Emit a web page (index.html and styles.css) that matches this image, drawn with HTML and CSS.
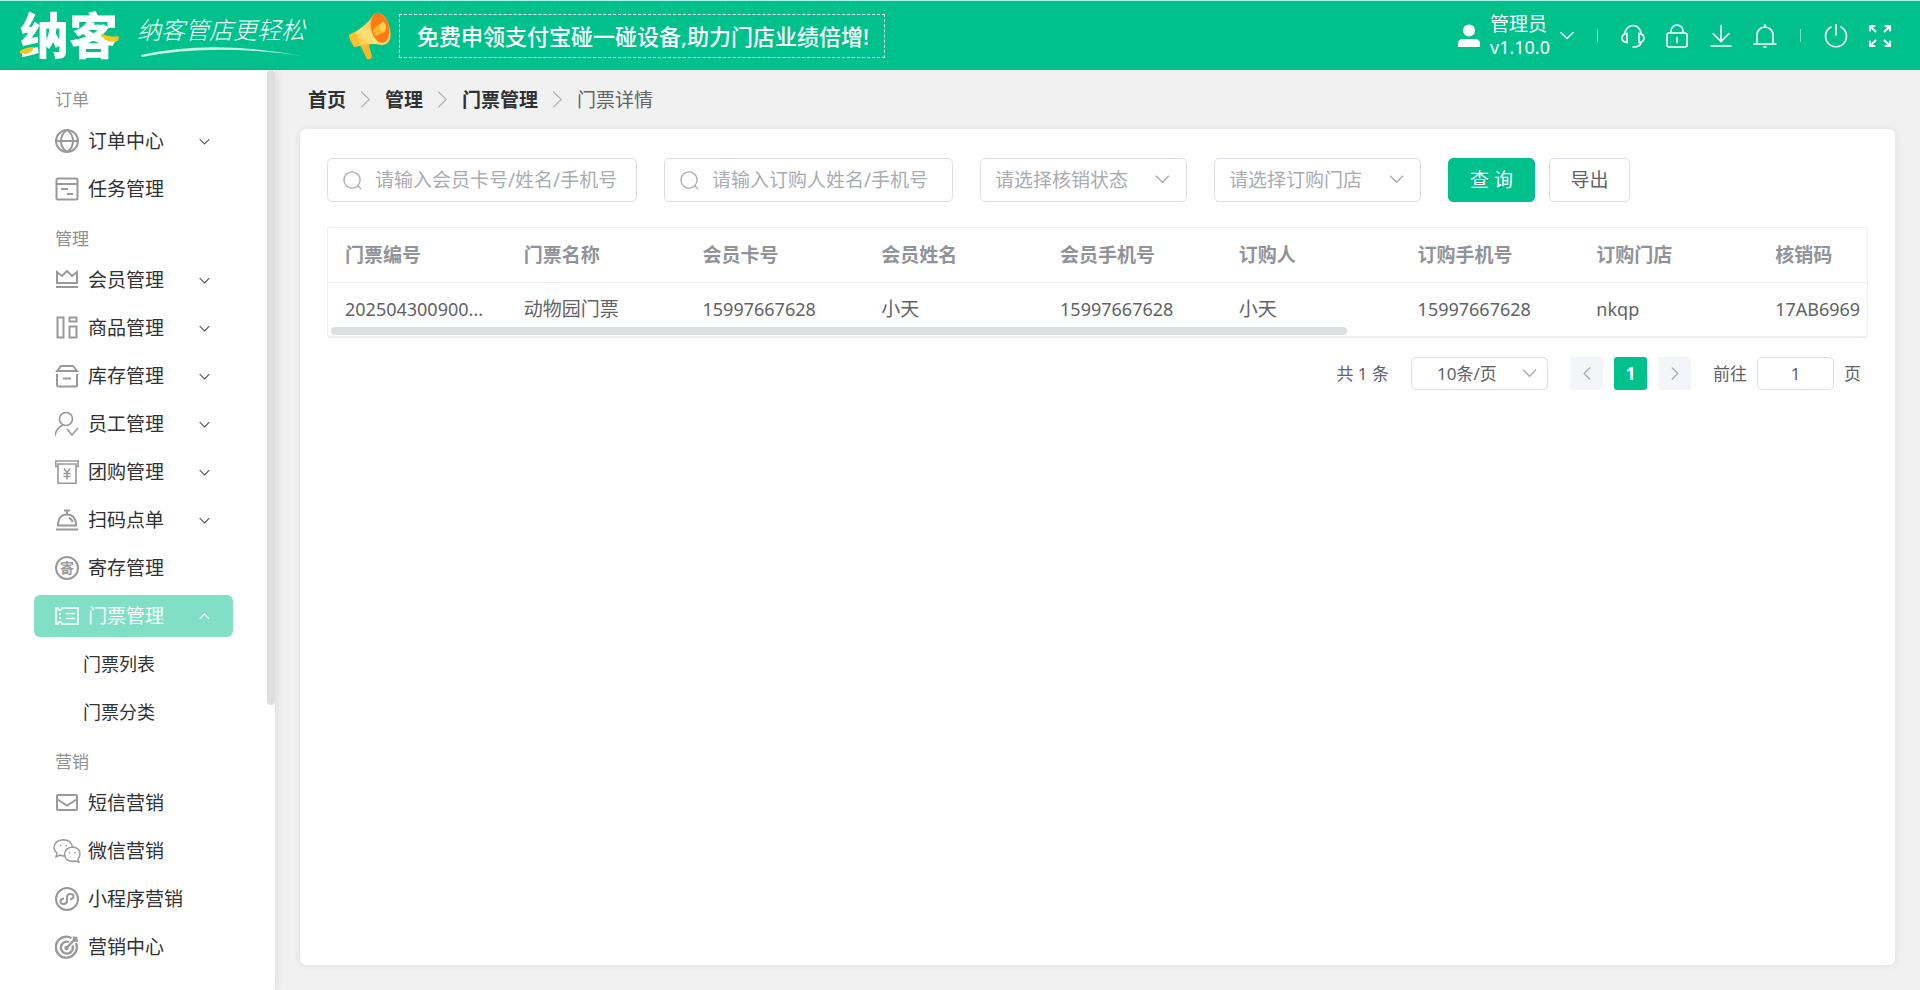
FILE: index.html
```html
<!DOCTYPE html>
<html lang="zh-CN">
<head>
  <meta charset="UTF-8" />
  <meta name="viewport" content="width=device-width, initial-scale=1.0"/>
  <title>门票详情</title>
  <link rel="stylesheet" href="styles.css">
</head>
<body>

  <!-- Shared chevrons -->
  <svg class="symbols" aria-hidden="true">
    <symbol id="down" viewBox="0 0 16 10"><path d="M1 1.500l7 7 7-7"/></symbol>
    <symbol id="up" viewBox="0 0 16 10"><path d="M1 8.500l7-7 7 7"/></symbol>
    <symbol id="right" viewBox="0 0 10 16"><path d="M1 .5l7.500 7.500L1 15.500"/></symbol>
    <symbol id="left" viewBox="0 0 10 16"><path d="M9 .5L1.500 8 9 15.500"/></symbol>
    <symbol id="search" viewBox="0 0 20 20"><circle cx="9.500" cy="9.500" r="8.500"/><path d="M15.500 15.500l3.500 3.500"/></symbol>
  </svg>

  <header class="header">
    <a class="logo" href="#">
      <span class="logo-name">纳客</span>
      <svg class="logo-accent" viewBox="0 0 100 44"><path d="M0 38q6-4 14-4-2 6-9 7l-5-1z"/><path d="M81 20q8 5 18 3l-1 5q-9 2-14-2z"/></svg>
    </a>
    <div class="slogan">
      <span class="slogan-text">纳客管店更轻松</span>
      <svg class="slogan-line" viewBox="0 0 162 12"><path d="M0 9Q70-7 162 10 72-3 1 11z"/></svg>
    </div>
    <a class="banner" href="#">
      <svg class="horn" viewBox="0 0 46 50">
        <defs>
          <linearGradient id="hornBody" x1="0" y1="1" x2="1" y2="0"><stop offset="0" stop-color="#ffb51f"/><stop offset=".4" stop-color="#ffe27a"/><stop offset="1" stop-color="#ff9a12"/></linearGradient>
        </defs>
        <path d="M11 32l9-2 4 16q-1 3-5 2z" fill="#ffb52a"/>
        <path d="M1 24Q17 17 26 3q12-4 16 15 3 16-8 16-12-3-27 2-5-5-6-12z" fill="url(#hornBody)"/>
        <path d="M1 24l6-3q4 5 4 13l-5 2q-4-6-5-12z" fill="#ffc02e"/>
        <ellipse cx="32" cy="17" rx="9" ry="15" transform="rotate(-12 32 17)" fill="#ff7a14"/>
        <path d="M25 18l8-6q5 1 4 9l-9 4q-3-2-3-7z" fill="#ffb52a"/>
        <ellipse cx="35" cy="16" rx="3" ry="5" fill="#ffd24d"/>
      </svg>
      <span class="banner-text">免费申领支付宝碰一碰设备,助力门店业绩倍增!</span>
    </a>

    <div class="tools">
      <button class="user" type="button">
        <svg class="user-icon" viewBox="0 0 22 24"><circle cx="11" cy="6.500" r="6"/><path d="M0 23v-3q0-5 5-5h12q5 0 5 5v3z"/></svg>
        <span class="user-name">管理员<br><span class="num">v1.10.0</span></span>
        <svg class="line user-arrow"><use href="#down"/></svg>
      </button>
      <span class="divider"></span>
      <button class="tool" type="button" aria-label="客服"><svg class="line" viewBox="0 0 24 24"><path d="M4 10a8 8.500 0 0 1 16 0M6 9.500v9Q1 18 1 14t5-4.500zM18 9.500v9q5-.5 5-4.500t-5-4.500zM20 18q0 5-8 5"/></svg></button>
      <button class="tool" type="button" aria-label="锁屏"><svg class="line" viewBox="0 0 24 24"><rect x="2" y="9" width="20" height="14" rx="2"/><path d="M6 9V7a6 6 0 0 1 12 0v2M12 13.500v5"/></svg></button>
      <button class="tool" type="button" aria-label="下载"><svg class="line" viewBox="0 0 24 24"><path d="M12 1.500V17M4 9.500l8 8 8-8M2 22h20"/></svg></button>
      <button class="tool" type="button" aria-label="消息"><svg class="line" viewBox="0 0 24 24"><path d="M12 .5v2M1 20h22M4 20v-9a8 8 0 0 1 16 0v9M11 23h2"/></svg></button>
      <span class="divider"></span>
      <button class="tool" type="button" aria-label="退出"><svg class="line" viewBox="0 0 24 24"><path d="M12 0v11M7 3a10.500 10.500 0 1 0 10 0"/></svg></button>
      <button class="tool" type="button" aria-label="全屏"><svg class="line full" viewBox="0 0 24 24"><path d="M2 6.500V2h4.500M2 2l5.500 5.500M17.500 2H22v4.500M22 2l-5.500 5.500M2 17.500V22h4.500M2 22l5.500-5.500M22 17.500V22h-4.500M22 22l-5.500-5.500"/></svg></button>
    </div>
  </header>

  <div class="layout">
    <aside class="sidebar">
      <nav class="menu">
        <h2 class="group">订单</h2>
        <a class="item" href="#"><svg class="icon" viewBox="0 0 24 24"><circle cx="12" cy="12" r="11"/><path d="M1 12h22M12 1Q6 5 6 12t6 11q6-4 6-11T12 1z"/></svg>订单中心<svg class="arrow"><use href="#down"/></svg></a>
        <a class="item" href="#"><svg class="icon" viewBox="0 0 24 24"><rect x="1.500" y="1.500" width="21" height="21" rx="1.500"/><path d="M2 7h20M6 12h7M12 17h6"/></svg>任务管理</a>

        <h2 class="group">管理</h2>
        <a class="item" href="#"><svg class="icon" viewBox="0 0 24 24"><path d="M2 15V4l5 4 5-5 5 5 5-4v11zM1 19h22"/></svg>会员管理<svg class="arrow"><use href="#down"/></svg></a>
        <a class="item" href="#"><svg class="icon" viewBox="0 0 24 24"><path d="M2.500 1.500h6v20h-6zM14.500 1.500h7v4h-7zM14.500 10.500h7v11h-7z"/></svg>商品管理<svg class="arrow"><use href="#down"/></svg></a>
        <a class="item" href="#"><svg class="icon" viewBox="0 0 24 24"><path d="M2 7l4-5h12l4 5zM2 10v11q0 1.500 1.500 1.500h17q1.500 0 1.500-1.500V10M8 14.500h8"/></svg>库存管理<svg class="arrow"><use href="#down"/></svg></a>
        <a class="item" href="#"><svg class="icon thin" viewBox="0 0 24 24"><circle cx="11" cy="7" r="6.500"/><path d="M0 24q1-8 8-11M12 17l5 6 6-7"/></svg>员工管理<svg class="arrow"><use href="#down"/></svg></a>
        <a class="item" href="#"><svg class="icon thin" viewBox="0 0 24 24"><path d="M3 6.500H.800V1h22.400v5.500H21M3 4v19.200h18V4zM9 8.500l3 4 3-4M12 12.500v7M8.500 13.500h7M8.500 16.500h7"/></svg>团购管理<svg class="arrow"><use href="#down"/></svg></a>
        <a class="item" href="#"><svg class="icon" viewBox="0 0 24 24"><path d="M9 2.500h6M12 2.500v4M3 17.500v-2q1-9 9-9t9 9v2zM1 21.500h22M14 10q3 1 3.500 4"/></svg>扫码点单<svg class="arrow"><use href="#down"/></svg></a>
        <a class="item" href="#"><span class="round">寄</span>寄存管理</a>
        <a class="item active" href="#"><svg class="icon" viewBox="0 0 24 24"><path d="M1 4h2q0 2 2 2t2-2h16v16H7q0-2-2-2t-2 2H1zM5 9v2M5 13v2M11 9.500h9M11 14.500h9"/></svg>门票管理<svg class="arrow"><use href="#up"/></svg></a>
        <a class="sub" href="#">门票列表</a>
        <a class="sub" href="#">门票分类</a>

        <h2 class="group">营销</h2>
        <a class="item" href="#"><svg class="icon" viewBox="0 0 24 24"><rect x="2" y="4" width="20" height="15" rx="1"/><path d="M2.500 8.500l9.500 6 9.500-6"/></svg>短信营销</a>
        <a class="item" href="#"><svg class="icon wechat" viewBox="0 0 28 24"><path d="M11 17q-2 0-4-1l-4 2 1-4Q1 12 1 8.500 2 1 10 .7q8 .3 9.500 6.800"/><path d="M20 8q7 1 7 7 0 3-2 5l1 3.200-3.500-1.200q-10 1.500-11-6.500Q12 8.500 20 8zM7.500 6v1.500M13.500 6v1.500M16.500 13v1.500M22 13v1.500"/></svg>微信营销</a>
        <a class="item" href="#"><svg class="icon" viewBox="0 0 24 24"><circle cx="12" cy="12" r="11"/><path d="M9 11.500q-3.500.5-3.500 3t3 2.500q3.500 0 3.500-3V10q0-3 3.500-3t3 2.500-3.500 3"/></svg>小程序营销</a>
        <a class="item" href="#"><svg class="icon bold" viewBox="0 0 24 24"><path d="M16.500 3A10.500 10.500 0 1 0 21 8M14 7a6 6 0 1 0 3.500 3.500M11.500 13L22 2M19 1.500v4h4"/><circle cx="11.500" cy="13" r="1"/></svg>营销中心</a>
      </nav>
      <div class="side-thumb"></div>
    </aside>

    <main class="main">
      <nav class="crumbs">
        <a href="#">首页</a>
        <svg><use href="#right"/></svg>
        <a href="#">管理</a>
        <svg><use href="#right"/></svg>
        <a href="#">门票管理</a>
        <svg><use href="#right"/></svg>
        <span>门票详情</span>
      </nav>

      <section class="card">
        <form class="filters">
          <label class="field member">
            <svg><use href="#search"/></svg>
            <input type="text" aria-label="会员" placeholder="请输入会员卡号/姓名/手机号">
          </label>
          <label class="field buyer">
            <svg><use href="#search"/></svg>
            <input type="text" aria-label="订购人" placeholder="请输入订购人姓名/手机号">
          </label>
          <div class="select">
            <select aria-label="核销状态"><option>请选择核销状态</option></select>
            <svg><use href="#down"/></svg>
          </div>
          <div class="select">
            <select aria-label="订购门店"><option>请选择订购门店</option></select>
            <svg><use href="#down"/></svg>
          </div>
          <div class="buttons">
            <button class="btn primary" type="button">查 询</button>
            <button class="btn" type="button">导出</button>
          </div>
        </form>

        <div class="table-box">
          <table class="table">
            <thead>
              <tr>
                <th>门票编号</th>
                <th>门票名称</th>
                <th>会员卡号</th>
                <th>会员姓名</th>
                <th>会员手机号</th>
                <th>订购人</th>
                <th>订购手机号</th>
                <th>订购门店</th>
                <th>核销码</th>
              </tr>
            </thead>
            <tbody>
              <tr>
                <td class="num">202504300900...</td>
                <td>动物园门票</td>
                <td class="num">15997667628</td>
                <td>小天</td>
                <td class="num">15997667628</td>
                <td>小天</td>
                <td class="num">15997667628</td>
                <td class="num">nkqp</td>
                <td class="num">17AB6969</td>
              </tr>
            </tbody>
          </table>
          <div class="table-thumb"></div>
        </div>

        <div class="pager">
          <span class="total">共 1 条</span>
          <div class="select small">
            <select aria-label="每页条数"><option>10条/页</option></select>
            <svg><use href="#down"/></svg>
          </div>
          <div class="pages">
            <button type="button" aria-label="上一页" disabled><svg><use href="#left"/></svg></button>
            <button type="button" class="current">1</button>
            <button type="button" aria-label="下一页" disabled><svg><use href="#right"/></svg></button>
          </div>
          <label class="jump">前往 <input type="text" value="1"> 页</label>
        </div>
      </section>
    </main>
  </div>

</body>
</html>
```
FILE: styles.css
```css
* {
  box-sizing: border-box;
}

body {
  margin: 0;
  min-height: 100vh;
  display: flex;
  flex-direction: column;
  background: #f1f1f1;
  color: #303133;
  font-family: "Noto Sans", "Noto Sans CJK SC", sans-serif;
  font-size: 19px;
  line-height: 24px;
}

a {
  color: inherit;
  text-decoration: none;
}

button,
input,
select {
  font: inherit;
  color: inherit;
}

button {
  padding: 0;
  border: 0;
  background: none;
  cursor: pointer;
}

svg {
  flex: none;
  fill: none;
  stroke: currentColor;
}

.symbols {
  position: absolute;
  width: 0;
  height: 0;
}

.num {
  font-size: 18px;
}

/* header */
.header {
  display: flex;
  align-items: center;
  height: 70px;
  padding: 0 28px 0 20px;
  border-top: 1px solid #a5f3e6;
  background: #00c08b;
  color: #fff;
}

.logo {
  position: relative;
  width: 100px;
}

.logo-name {
  font-size: 49px;
  font-weight: 900;
  line-height: 44px;
}

.logo-accent {
  position: absolute;
  left: 0;
  top: 0;
  width: 100px;
  height: 44px;
  fill: #f5c51c;
  stroke: none;
}

.slogan {
  display: flex;
  flex-direction: column;
  width: 175px;
  margin-left: 17px;
}

.slogan-text {
  font-size: 24px;
  font-style: italic;
  font-weight: 300;
  line-height: 32px;
}

.slogan-line {
  width: 162px;
  height: 12px;
  margin-left: 4px;
  fill: #c9f5e8;
  stroke: none;
}

.banner {
  display: flex;
  align-items: center;
  gap: 5px;
  margin-left: 36px;
}

.horn {
  width: 46px;
  height: 50px;
  stroke: none;
}

.banner-text {
  padding: 0 15px 0 17px;
  border: 1px dashed #fff;
  font-size: 22px;
  font-weight: 500;
  line-height: 42px;
}

.tools {
  display: flex;
  align-items: center;
  gap: 20px;
  margin-left: auto;
}

.user {
  display: flex;
  align-items: center;
  gap: 10px;
  text-align: left;
}

.user-icon {
  width: 22px;
  height: 24px;
  fill: #fff;
  stroke: none;
}

.user-name {
  line-height: 23px;
}

.user-arrow {
  width: 14px;
  height: 9px;
}

.divider {
  width: 1px;
  height: 13px;
  margin: 0 3px;
  background: #7fdfc4;
}

.tool,
.tool svg {
  display: block;
  width: 24px;
  height: 24px;
}

.line {
  stroke-width: 1.6;
  stroke-linecap: round;
}

.full {
  stroke-width: 2;
}

/* sidebar */
.layout {
  display: flex;
  flex: 1;
}

.sidebar {
  position: relative;
  z-index: 1;
  flex: none;
  width: 275px;
  padding-top: 4px;
  background: #fff;
  box-shadow: 2px 0 8px rgba(0, 0, 0, 0.08);
}

.side-thumb {
  position: absolute;
  top: 0;
  right: 0;
  width: 8px;
  height: 69%;
  border-radius: 4px;
  background: #dddfdf;
}

.menu {
  display: flex;
  flex-direction: column;
}

.group {
  height: 43px;
  margin: 0;
  padding: 14px 0 0 55px;
  color: #909090;
  font-size: 17px;
  font-weight: 400;
}

.item {
  display: flex;
  align-items: center;
  gap: 9px;
  height: 42px;
  margin: 3px 42px 3px 34px;
  padding: 0 23px 0 21px;
  border-radius: 6px;
}

.item.active {
  background: #80dfc4;
  color: #fff;
}

.icon {
  width: 24px;
  height: 24px;
  color: #999;
  stroke-width: 2;
}

.icon.thin {
  stroke-width: 1.6;
}

.icon.bold {
  stroke-width: 2.4;
}

.icon.wechat {
  width: 28px;
  margin: 0 -2px;
  stroke-width: 1.4;
}

.active .icon {
  color: #fff;
  stroke-width: 1.6;
}

.round {
  display: flex;
  align-items: center;
  justify-content: center;
  width: 24px;
  height: 24px;
  border: 2px solid #999;
  border-radius: 50%;
  color: #999;
  font-size: 14px;
  font-weight: 700;
  line-height: 20px;
}

.arrow {
  width: 11px;
  height: 7px;
  margin-left: auto;
  color: #555;
  stroke-width: 1.6;
}

.active .arrow {
  color: #fff;
}

.sub {
  padding-left: 83px;
  font-size: 18px;
  line-height: 48px;
}

/* page */
.main {
  display: flex;
  flex: 1;
  flex-direction: column;
  min-width: 0;
  padding: 0 25px 25px;
}

.crumbs {
  display: flex;
  align-items: center;
  gap: 14px;
  height: 59px;
  padding-left: 8px;
  color: #606266;
}

.crumbs a {
  color: #303133;
  font-weight: 700;
}

.crumbs svg {
  width: 11px;
  height: 17px;
  color: #a8abb2;
}

.card {
  flex: 1;
  padding: 29px 27px;
  border-radius: 6px;
  background: #fff;
  box-shadow: 0 0 8px rgba(0, 0, 0, 0.08);
}

.filters {
  display: flex;
  gap: 27px;
}

.field {
  display: flex;
  align-items: center;
  gap: 13px;
  height: 44px;
  padding: 0 15px;
  border: 1px solid #dcdfe6;
  border-radius: 5px;
}

.field svg {
  width: 19px;
  height: 19px;
  color: #a8abb2;
  stroke-width: 1.4;
}

.field input {
  flex: 1;
  min-width: 0;
  padding: 0;
  border: 0;
  outline: 0;
}

.field input::placeholder {
  color: #a8abb2;
  opacity: 1;
}

.member {
  width: 310px;
}

.buyer {
  width: 289px;
}

.select {
  position: relative;
  width: 207px;
  height: 44px;
}

.select select {
  width: 100%;
  height: 100%;
  padding: 0 14px;
  border: 1px solid #dcdfe6;
  border-radius: 5px;
  background: #fff;
  color: #a8abb2;
  appearance: none;
}

.select svg {
  position: absolute;
  top: 50%;
  right: 17px;
  width: 15px;
  height: 10px;
  margin-top: -6px;
  color: #a8abb2;
  stroke-width: 1.4;
  pointer-events: none;
}

.buttons {
  display: flex;
  gap: 14px;
}

.btn {
  width: 81px;
  height: 44px;
  border: 1px solid #dcdfe6;
  border-radius: 5px;
  color: #606266;
}

.btn.primary {
  width: 87px;
  border-color: #00c08b;
  background: #00c08b;
  color: #fff;
}

/* table */
.table-box {
  position: relative;
  margin-top: 25px;
  overflow: hidden;
  border: 1px solid #ebeef5;
  border-bottom-width: 2px;
  border-radius: 3px;
}

.table {
  width: 1609px;
  border-collapse: collapse;
  table-layout: fixed;
}

.table th,
.table td {
  height: 54px;
  padding: 0 17px;
  text-align: left;
  white-space: nowrap;
}

.table th {
  border-bottom: 1px solid #ebeef5;
  color: #909399;
  font-weight: 700;
}

.table td {
  color: #606266;
}

.table-thumb {
  position: absolute;
  bottom: 1px;
  left: 3px;
  width: 66%;
  height: 8px;
  border-radius: 4px;
  background: #dddfe0;
}

/* pagination */
.pager {
  display: flex;
  align-items: center;
  justify-content: flex-end;
  gap: 22px;
  margin-top: 19px;
  padding-right: 7px;
  color: #606266;
  font-size: 17px;
}

.select.small {
  width: 137px;
  height: 33px;
}

.small select {
  padding: 0 25px;
  color: #606266;
}

.small svg {
  right: 11px;
}

.pages {
  display: flex;
  gap: 11px;
}

.pages button {
  display: flex;
  align-items: center;
  justify-content: center;
  width: 33px;
  height: 33px;
  border-radius: 3px;
  background: #f4f5f8;
}

.pages svg {
  width: 8px;
  height: 13px;
  color: #a8abb2;
  stroke-width: 1.6;
}

.pages .current {
  background: #00c08b;
  color: #fff;
  font-weight: 700;
}

.jump {
  display: flex;
  align-items: center;
  gap: 10px;
}

.jump input {
  width: 77px;
  height: 33px;
  border: 1px solid #dcdfe6;
  border-radius: 5px;
  text-align: center;
}
```
